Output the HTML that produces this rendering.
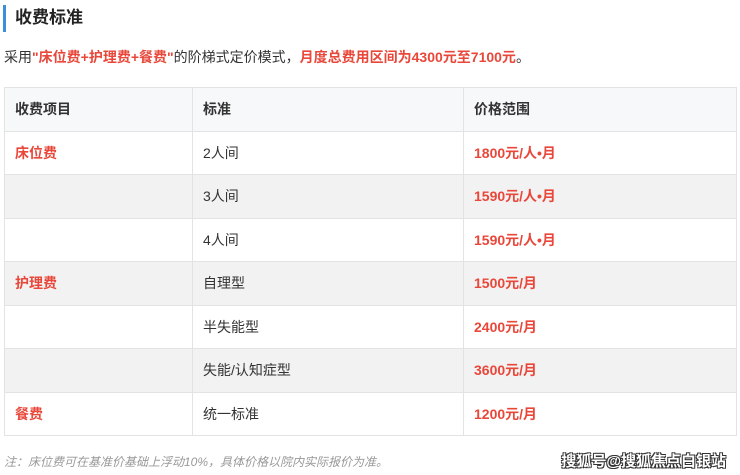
<!DOCTYPE html>
<html><head><meta charset="utf-8"><style>
body{margin:0;width:740px;height:475px;background:#fff;font-family:"Liberation Sans","Noto Sans CJK SC",sans-serif;color:#333;position:relative;overflow:hidden}
.bar{position:absolute;left:3px;top:5px;width:3px;height:27px;background:#3d8fd9}
.title{position:absolute;left:15px;top:6px;font-size:17px;font-weight:bold;color:#222;line-height:24px}
.sub{position:absolute;left:4px;top:46px;font-size:14px;line-height:22px;color:#333}
.r{color:#e8473a;font-weight:bold}
table{position:absolute;left:4px;top:87px;border-collapse:collapse;width:733px;font-size:14px}
tr{height:43.5px}
td{border:1px solid #e3e3e3;padding:0 0 0 10px;box-sizing:border-box}
tr.h td{background:#f7f8fa;font-weight:bold;color:#333}
tr.g td{background:#f2f2f2}
td.p{color:#e8473a;font-weight:bold}
.note{position:absolute;left:4px;top:453px;font-size:12px;font-style:italic;color:#999}
.wm{position:absolute;right:14px;top:450px;font-size:15px;font-weight:bold;color:#fff;text-shadow:-1px -1px 0 #333,1px -1px 0 #333,-1px 1px 0 #333,1px 1px 0 #333}
</style></head><body>
<div class="bar"></div><div class="title">收费标准</div>
<div class="sub">采用<span class="r">"床位费+护理费+餐费"</span>的阶梯式定价模式，<span class="r">月度总费用区间为4300元至7100元</span>。</div>
<table>
<tr class="h"><td style="width:188px">收费项目</td><td style="width:271px">标准</td><td>价格范围</td></tr>
<tr><td class="p">床位费</td><td>2人间</td><td class="p">1800元/人•月</td></tr>
<tr class="g"><td></td><td>3人间</td><td class="p">1590元/人•月</td></tr>
<tr><td></td><td>4人间</td><td class="p">1590元/人•月</td></tr>
<tr class="g"><td class="p">护理费</td><td>自理型</td><td class="p">1500元/月</td></tr>
<tr><td></td><td>半失能型</td><td class="p">2400元/月</td></tr>
<tr class="g"><td></td><td>失能/认知症型</td><td class="p">3600元/月</td></tr>
<tr><td class="p">餐费</td><td>统一标准</td><td class="p">1200元/月</td></tr>
</table>
<div class="note">注：床位费可在基准价基础上浮动10%，具体价格以院内实际报价为准。</div>
<div class="wm">搜狐号@搜狐焦点白银站</div>
</body></html>
